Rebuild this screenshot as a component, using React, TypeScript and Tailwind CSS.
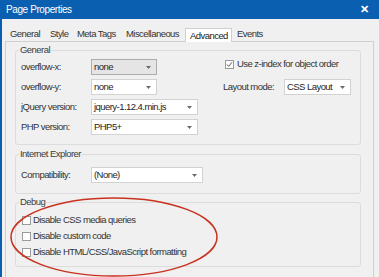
import React from "react";

const tabs = [
  { label: "General", w: "w-[40px]" },
  { label: "Style", w: "w-[27px]" },
  { label: "Meta Tags", w: "w-[49px]" },
  { label: "Miscellaneous", w: "w-[64px]" },
  { label: "Advanced", w: "w-[47px]", active: true },
  { label: "Events", w: "w-[40px]" },
];

function Arrow() {
  return (
    <svg width="5" height="3" viewBox="0 0 5 3" className="shrink-0">
      <path d="M0 0h5L2.5 3z" fill="#6b6b6b" />
    </svg>
  );
}

function Select({ value, w, gray }: { value: string; w: string; gray?: boolean }) {
  return (
    <div
      className={`${w} h-[16px] flex items-center justify-between pl-[2px] pr-[5px] border ${
        gray ? "bg-[#e5e5e5] border-[#adadad]" : "bg-white border-[#d2d2d2]"
      } text-[#1e1e1e]`}
    >
      <span>{value}</span>
      <Arrow />
    </div>
  );
}

function Check({ checked }: { checked?: boolean }) {
  return (
    <span className="w-[9px] h-[9px] border border-[#9a9a9a] bg-white flex items-center justify-center shrink-0">
      {checked && (
        <svg width="7" height="7" viewBox="0 0 7 7">
          <path d="M1 3.5l1.7 1.8L6 1.3" stroke="#555" strokeWidth="1" fill="none" />
        </svg>
      )}
    </span>
  );
}

function Group({ title, className, children }: { title: string; className?: string; children: React.ReactNode }) {
  return (
    <fieldset className={`border border-[#dcdcdc] rounded-[3px] pl-[5px] ${className ?? ""}`}>
      <legend className="-ml-[2px] px-[1px] leading-[12px] text-[#3c3c3c]">{title}</legend>
      {children}
    </fieldset>
  );
}

export default function App() {
  return (
    <div className="relative w-[379px] h-[277px] overflow-hidden bg-[#f0f0f0] border-l-2 border-[#0a5fb0] font-['Liberation_Sans',Arial,sans-serif] text-[9.5px] tracking-[-0.55px] text-[#333]">
      {/* Title bar */}
      <div className="h-[19px] bg-[#0a5fb0] flex items-center justify-between pl-[4px] pr-[10px] text-white text-[10px] tracking-[-0.4px]">
        <span>Page Properties</span>
        <span className="text-[11px] font-bold">✕</span>
      </div>

      <div className="ml-[3px] mr-[5px]">
        {/* Tabs */}
        <div className="flex items-end h-[22px]">
          {tabs.map((t) =>
            t.active ? (
              <div
                key={t.label}
                className={`${t.w} relative z-10 h-[14px] -mb-px pl-[4px] bg-white border border-b-0 border-[#d0d0d0] leading-[13px] text-[#222]`}
              >
                {t.label}
              </div>
            ) : (
              <div key={t.label} className={`${t.w} h-[13px] pl-[5px] leading-[12px] text-[#333]`}>
                {t.label}
              </div>
            )
          )}
        </div>

        {/* Panel */}
        <div className="h-[260px] border border-[#d0d0d0] bg-[#f0f0f0] pt-[2px] pl-[9px] pr-[12px]">
          <Group title="General" className="pb-[7px]">
            <div className="pt-px">
              <div className="h-[20px] flex items-center">
                <div className="w-[202px] flex items-center">
                  <span className="w-[70px]">overflow-x:</span>
                  <Select value="none" w="w-[66px]" gray />
                </div>
                <div className="pl-[2px] flex items-center gap-[3px] -mt-[5px]">
                  <Check checked />
                  <span>Use z-index for object order</span>
                </div>
              </div>
              <div className="h-[20px] flex items-center">
                <div className="w-[202px] flex items-center">
                  <span className="w-[70px]">overflow-y:</span>
                  <Select value="none" w="w-[66px]" />
                </div>
                <span className="w-[61px]">Layout mode:</span>
                <Select value="CSS Layout" w="w-[67px]" />
              </div>
              <div className="h-[20px] flex items-center">
                <span className="w-[70px]">jQuery version:</span>
                <Select value="jquery-1.12.4.min.js" w="w-[107px]" />
              </div>
              <div className="h-[20px] flex items-center">
                <span className="w-[70px]">PHP version:</span>
                <Select value="PHP5+" w="w-[107px]" />
              </div>
            </div>
          </Group>

          <Group title="Internet Explorer" className="mt-[3px] pb-[8px]">
            <div className="pt-[5px]">
              <div className="h-[20px] flex items-center">
                <span className="w-[70px]">Compatibility:</span>
                <Select value="(None)" w="w-[112px]" />
              </div>
            </div>
          </Group>

          <Group title="Debug" className="mt-[2px] pb-[6px]">
            <div className="pt-[4px]">
              {[
                "Disable CSS media queries",
                "Disable custom code",
                "Disable HTML/CSS/JavaScript formatting",
              ].map((l) => (
                <div key={l} className="h-[16px] flex items-center gap-[2px] pl-px">
                  <Check />
                  <span>{l}</span>
                </div>
              ))}
            </div>
          </Group>
        </div>
      </div>

      {/* Red annotation ellipse */}
      <svg className="absolute left-0 top-0 pointer-events-none" width="379" height="277">
        <ellipse cx="112" cy="237" rx="103" ry="39" fill="none" stroke="#c8321f" strokeWidth="1.5" />
      </svg>
    </div>
  );
}
